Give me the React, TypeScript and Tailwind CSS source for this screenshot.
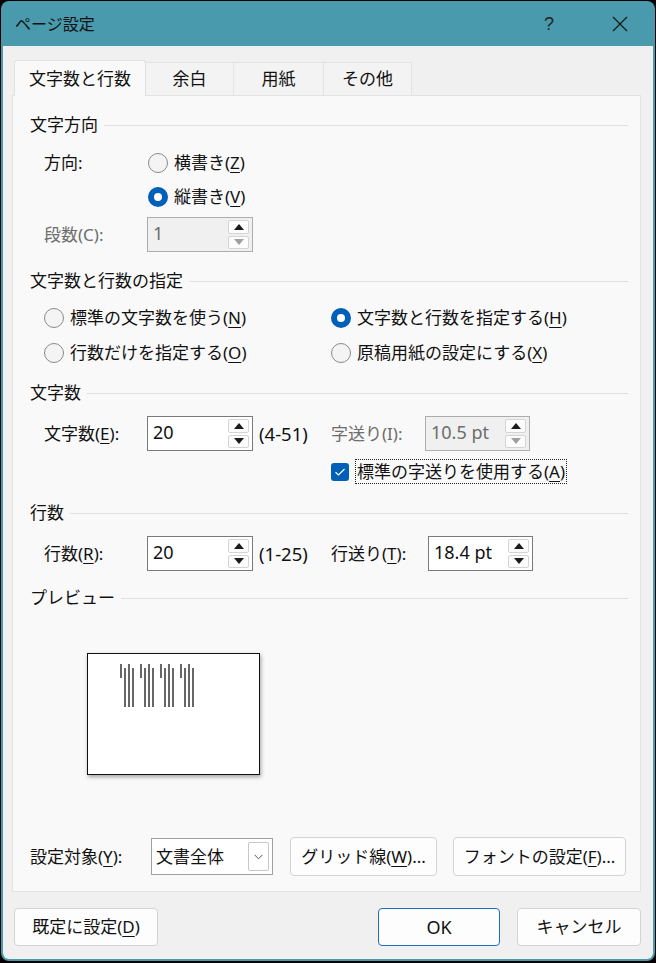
import React from "react";

const U = ({ c }: { c: string }) => <span className="underline underline-offset-[3px] decoration-1">{c}</span>;

function Radio({ checked, children }: { checked?: boolean; children: React.ReactNode }) {
  return (
    <div className="flex items-center h-[26px]">
      {checked ? (
        <div className="w-[20px] h-[20px] rounded-full bg-[#005FB8] flex items-center justify-center">
          <div className="w-[8px] h-[8px] rounded-full bg-white" />
        </div>
      ) : (
        <div className="w-[20px] h-[20px] rounded-full border border-[#8A8A8A] bg-[#F4F4F4]" />
      )}
      <span className="ml-[6px] leading-[20px]">{children}</span>
    </div>
  );
}

function Tri({ up, disabled }: { up?: boolean; disabled?: boolean }) {
  return (
    <svg width="10" height="6" viewBox="0 0 10 6">
      <polygon points={up ? "0,6 10,6 5,0" : "0,0 10,0 5,6"} fill={disabled ? "#A0A0A0" : "#1A1A1A"} />
    </svg>
  );
}

function Spin({ w, value, disabled }: { w: string; value: string; disabled?: boolean }) {
  return (
    <div
      className={`${w} h-[35px] border flex items-stretch ${
        disabled ? "border-[#ADADAD] bg-[#F0F0F0] text-[#6D6D6D]" : "border-[#7A7A7A] bg-white text-[#111]"
      }`}
    >
      <div className="flex-1 pl-[5px] pt-[3px] leading-[24px] text-[18px]">{value}</div>
      <div className="flex flex-col gap-[2px] pt-[2px] pb-[2px] pr-[3px]">
        <div className="w-[21px] flex-1 border border-[#D4D4D4] rounded-[2px] bg-[#FCFCFC] flex items-center justify-center">
          <Tri up />
        </div>
        <div className="w-[21px] flex-1 border border-[#D4D4D4] rounded-[2px] bg-[#FCFCFC] flex items-center justify-center">
          <Tri disabled={disabled} />
        </div>
      </div>
    </div>
  );
}

function Header({ title }: { title: string }) {
  return (
    <div className="flex items-center h-[20px] pl-[17px] pr-[12px]">
      <span className="leading-[20px]">{title}</span>
      <div className="flex-1 h-px bg-[#E0E0E0] ml-[6px]" />
    </div>
  );
}

function Btn({ w, children, primary }: { w: string; children: React.ReactNode; primary?: boolean }) {
  return (
    <div
      className={`${w} h-full rounded-[4px] bg-[#FDFDFD] border flex items-center justify-center ${
        primary ? "border-[#1E6FC1]" : "border-[#D3D3D3]"
      }`}
    >
      {children}
    </div>
  );
}

export default function App() {
  const groups = [33, 53, 73, 93];
  return (
    <div className="w-[656px] h-[963px] bg-black pt-[1px] pl-[1px] font-['Noto_Sans','Noto_Sans_CJK_JP',sans-serif] text-[17px] text-[#111]">
      <div className="w-[654px] h-[960px] rounded-[8px] bg-[#489AAC] flex flex-col px-[2px] pb-[2px]">
        {/* title bar */}
        <div className="h-[45px] flex items-center pl-[12px] shrink-0">
          <span className="text-[16px] leading-[20px] text-[#111]">ページ設定</span>
          <span className="ml-auto mr-[58px] text-[18px] leading-[20px] text-[#222] font-['Liberation_Sans',sans-serif] font-light">?</span>
          <svg width="16" height="16" viewBox="0 0 16 16" className="mr-[25px]">
            <path d="M1 1 L15 15 M15 1 L1 15" stroke="#1A1A1A" strokeWidth="1.3" />
          </svg>
        </div>
        {/* body */}
        <div className="flex-1 bg-[#F0F0F0] rounded-b-[6px] flex flex-col">
          {/* tabs */}
          <div className="mt-[14px] h-[35px] flex items-end pl-[11px] relative z-10">
            <div className="w-[132px] h-[36px] -mb-px bg-[#F9F9F9] border border-b-0 border-[#E0E0E0] rounded-t-[3px] flex items-center justify-center">
              文字数と行数
            </div>
            <div className="w-[88px] h-[33px] bg-[#F3F3F3] border border-b-0 border-l-0 border-[#E3E3E3] flex items-center justify-center">
              余白
            </div>
            <div className="w-[90px] h-[33px] bg-[#F3F3F3] border border-b-0 border-l-0 border-[#E3E3E3] flex items-center justify-center">
              用紙
            </div>
            <div className="w-[88px] h-[33px] bg-[#F3F3F3] border border-b-0 border-l-0 border-[#E3E3E3] flex items-center justify-center">
              その他
            </div>
          </div>
          {/* panel */}
          <div className="ml-[9px] w-[629px] h-[797px] border border-[#E3E3E3] bg-[#F9F9F9] flex flex-col">
            <div className="mt-[19px]">
              <Header title="文字方向" />
            </div>
            <div className="mt-[15px] h-[26px] flex items-center pl-[31px]">
              <span className="w-[104px]">方向:</span>
              <Radio>
                横書き(<U c="Z" />)
              </Radio>
            </div>
            <div className="mt-[8px] h-[26px] flex items-center pl-[135px]">
              <Radio checked>
                縦書き(<U c="V" />)
              </Radio>
            </div>
            <div className="mt-[7px] h-[35px] flex items-center pl-[31px]">
              <span className="w-[103px] text-[#6D6D6D]">段数(C):</span>
              <Spin w="w-[106px]" value="1" disabled />
            </div>

            <div className="mt-[19px]">
              <Header title="文字数と行数の指定" />
            </div>
            <div className="mt-[14px] h-[26px] flex items-center pl-[31px]">
              <div className="w-[287px]">
                <Radio>
                  標準の文字数を使う(<U c="N" />)
                </Radio>
              </div>
              <Radio checked>
                文字数と行数を指定する(<U c="H" />)
              </Radio>
            </div>
            <div className="mt-[9px] h-[26px] flex items-center pl-[31px]">
              <div className="w-[287px]">
                <Radio>
                  行数だけを指定する(<U c="O" />)
                </Radio>
              </div>
              <Radio>
                原稿用紙の設定にする(<U c="X" />)
              </Radio>
            </div>

            <div className="mt-[17px]">
              <Header title="文字数" />
            </div>
            <div className="mt-[13px] h-[35px] flex items-center">
              <div className="w-[318px] flex items-center pl-[31px]">
                <span className="w-[103px]">
                  文字数(<U c="E" />):
                </span>
                <Spin w="w-[106px]" value="20" />
                <span className="ml-[6px] text-[18.5px]">(4-51)</span>
              </div>
              <span className="w-[94px] text-[#6D6D6D]">字送り(I):</span>
              <Spin w="w-[105px]" value="10.5 pt" disabled />
            </div>
            <div className="mt-[8px] h-[25px] flex items-center pl-[318px]">
              <div className="w-[18px] h-[18px] rounded-[3px] bg-[#005FB8] flex items-center justify-center">
                <svg width="12" height="10" viewBox="0 0 12 10">
                  <path d="M1.5 5.2 L4.5 8 L10.5 2" fill="none" stroke="white" strokeWidth="1.2" />
                </svg>
              </div>
              <div className="ml-[6px] h-[25px] border border-dotted border-[#222] px-[1px] flex items-center">
                標準の字送りを使用する(<U c="A" />)
              </div>
            </div>

            <div className="mt-[19px]">
              <Header title="行数" />
            </div>
            <div className="mt-[13px] h-[35px] flex items-center">
              <div className="w-[318px] flex items-center pl-[31px]">
                <span className="w-[103px]">
                  行数(<U c="R" />):
                </span>
                <Spin w="w-[106px]" value="20" />
                <span className="ml-[6px] text-[18.5px]">(1-25)</span>
              </div>
              <span className="w-[97px]">
                行送り(<U c="T" />):
              </span>
              <Spin w="w-[105px]" value="18.4 pt" />
            </div>

            <div className="mt-[17px]">
              <Header title="プレビュー" />
            </div>
            <div className="mt-[45px] ml-[74px] w-[173px] h-[122px] bg-white border border-[#111] shadow-[1px_2px_4px_rgba(0,0,0,0.35)]">
              <svg width="171" height="120" viewBox="0 0 171 120">
                {groups.map((x) => (
                  <g key={x} stroke="#000" strokeWidth="1.2">
                    <line x1={x} y1={10} x2={x} y2={24} />
                    <line x1={x + 4} y1={14} x2={x + 4} y2={53} />
                    <line x1={x + 8} y1={10} x2={x + 8} y2={53} />
                    <line x1={x + 12} y1={14} x2={x + 12} y2={53} />
                  </g>
                ))}
              </svg>
            </div>
            <div className="mt-[62px] h-[39px] flex items-center pl-[17px]">
              <span className="w-[121px]">
                設定対象(<U c="Y" />):
              </span>
              <div className="w-[122px] h-[37px] border border-[#A0A0A0] bg-white flex items-center pl-[4px] pr-[3px]">
                <span className="flex-1">文書全体</span>
                <div className="w-[21px] h-[29px] border border-[#C8C8C8] rounded-[2px] flex items-center justify-center">
                  <svg width="9" height="6" viewBox="0 0 9 6">
                    <path d="M0.5 0.8 L4.5 4.8 L8.5 0.8" fill="none" stroke="#555" strokeWidth="1" />
                  </svg>
                </div>
              </div>
              <div className="ml-[17px] h-[39px]">
                <Btn w="w-[147px]">
                  グリッド線(<U c="W" />)...
                </Btn>
              </div>
              <div className="ml-[16px] h-[39px]">
                <Btn w="w-[173px]">
                  フォントの設定(<U c="F" />)...
                </Btn>
              </div>
            </div>
          </div>
          {/* footer */}
          <div className="mt-[16px] h-[38px] flex pl-[11px]">
            <Btn w="w-[144px]">
              既定に設定(<U c="D" />)
            </Btn>
            <div className="ml-[220px]">
              <Btn w="w-[122px]" primary>
                <span className="text-[18px]">OK</span>
              </Btn>
            </div>
            <div className="ml-[17px]">
              <Btn w="w-[124px]">キャンセル</Btn>
            </div>
          </div>
        </div>
      </div>
    </div>
  );
}
